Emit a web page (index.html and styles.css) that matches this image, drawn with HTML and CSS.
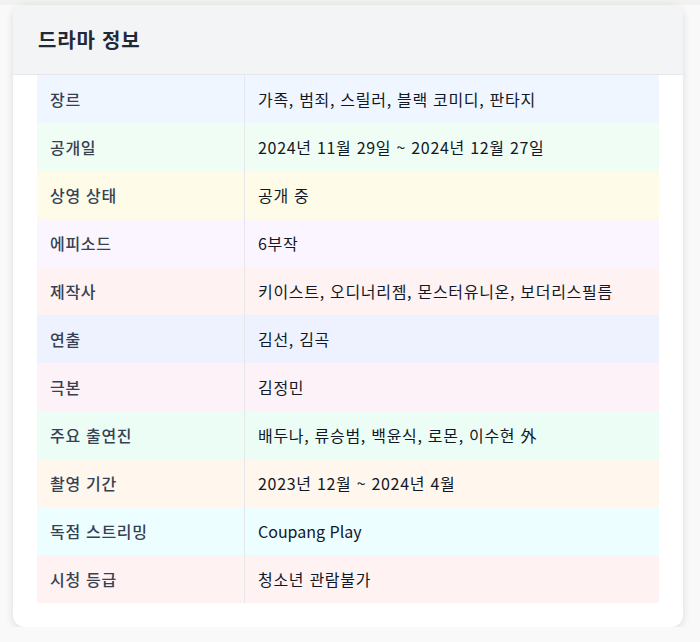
FILE: index.html
```html
<!DOCTYPE html>
<html lang="ko">
<head>
<meta charset="utf-8">
<link rel="stylesheet" href="styles.css">
</head>
<body>
<div class="topbar"></div>
<section class="card">
  <header class="card-head"><h2 class="title">드라마 정보</h2></header>
  <div class="card-body">
    <table class="info">
      <tbody>
        <tr class="r-blue"><th>장르</th><td>가족, 범죄, 스릴러, 블랙 코미디, 판타지</td></tr>
        <tr class="r-green"><th>공개일</th><td>2024년 11월 29일 ~ 2024년 12월 27일</td></tr>
        <tr class="r-yellow"><th>상영 상태</th><td>공개 중</td></tr>
        <tr class="r-purple"><th>에피소드</th><td>6부작</td></tr>
        <tr class="r-red"><th>제작사</th><td>키이스트, 오디너리젬, 몬스터유니온, 보더리스필름</td></tr>
        <tr class="r-indigo"><th>연출</th><td>김선, 김곡</td></tr>
        <tr class="r-pink"><th>극본</th><td>김정민</td></tr>
        <tr class="r-emerald"><th>주요 출연진</th><td>배두나, 류승범, 백윤식, 로몬, 이수현 外</td></tr>
        <tr class="r-orange"><th>촬영 기간</th><td>2023년 12월 ~ 2024년 4월</td></tr>
        <tr class="r-cyan"><th>독점 스트리밍</th><td class="latin">Coupang Play</td></tr>
        <tr class="r-rose"><th>시청 등급</th><td>청소년 관람불가</td></tr>
      </tbody>
    </table>
  </div>
</section>
</body>
</html>
```
FILE: styles.css
```css
html, body {
  margin: 0;
  padding: 0;
}
body {
  background: #f9f9f9;
  font-family: "Noto Sans CJK KR", "Noto Sans", sans-serif;
  color: #1f2937;
}
.topbar {
  height: 5px;
  background: #f1f1ef;
}
.card {
  margin: 0 17px 0 13px;
  background: #fff;
  border-radius: 12px;
  overflow: hidden;
  box-shadow: 0 2px 8px rgba(0,0,0,0.12);
}
.card-head {
  background: #f3f4f6;
  border-bottom: 1px solid #e5e7eb;
  height: 69px;
  display: flex;
  align-items: center;
  padding: 0 25px;
}
.title {
  margin: 0;
  font-size: 20px;
  font-weight: 700;
  letter-spacing: 0.8px;
  color: #1f2937;
}
.card-body {
  padding: 0 24px 24px;
}
.info {
  width: 100%;
  border-collapse: collapse;
  font-size: 16px;
  letter-spacing: 0.7px;
}
.info th, .info td {
  height: 48px;
  padding: 0 13px;
  text-align: left;
  vertical-align: middle;
}
.info th {
  width: 181px;
  font-weight: 500;
  color: #374151;
  border-right: 1px solid #e5e7eb;
}
.info td {
  color: #111827;
}
.info td.latin {
  letter-spacing: 0;
}
.r-blue { background: #eff6ff; }
.r-green { background: #f0fdf4; }
.r-yellow { background: #fefce8; }
.r-purple { background: #faf5ff; }
.r-red { background: #fef2f2; }
.r-indigo { background: #eef2ff; }
.r-pink { background: #fdf2f8; }
.r-emerald { background: #ecfdf5; }
.r-orange { background: #fff7ed; }
.r-cyan { background: #ecfeff; }
.r-rose { background: #fef2f2; }
```
